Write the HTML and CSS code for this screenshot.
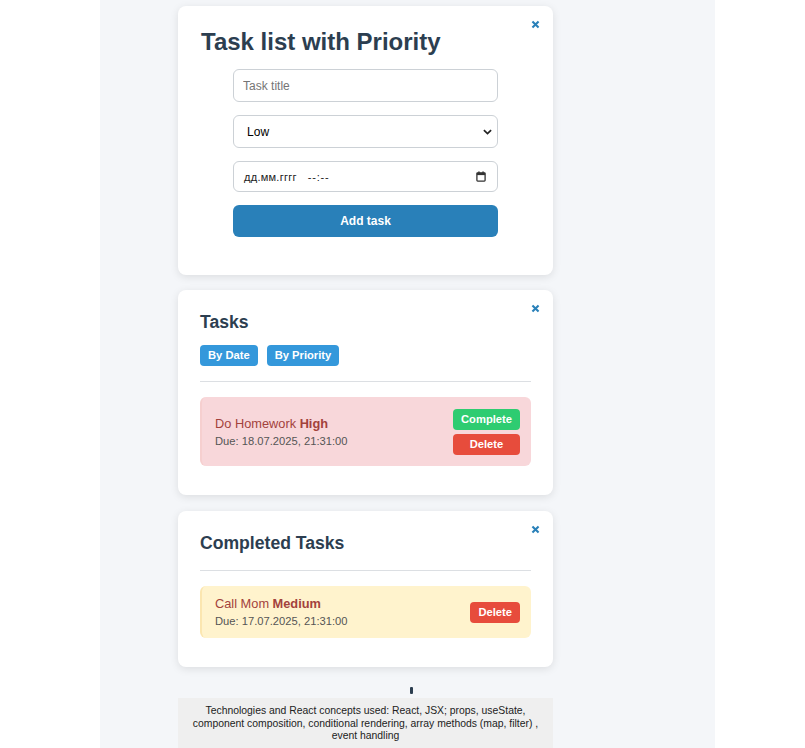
FILE: index.html
```html
<!DOCTYPE html>
<html lang="en">
<head>
<meta charset="utf-8">
<title>Task list with Priority</title>
<link rel="stylesheet" href="styles.css">
</head>
<body>
<div class="page">
  <div class="column">
    <div class="cards">
      <section class="card card-form">
        <button class="close" type="button" aria-label="Close">
          <svg viewBox="0 0 10 10" width="9" height="9"><path d="M1.6 1.6 L8.4 8.4 M8.4 1.6 L1.6 8.4" stroke="#2980b9" stroke-width="2.3" fill="none"/></svg>
        </button>
        <h1>Task list with Priority</h1>
        <form class="task-form">
          <input class="field text-field" type="text" placeholder="Task title">
          <div class="select-wrap">
            <select class="field select-field">
              <option>Low</option>
              <option>Medium</option>
              <option>High</option>
            </select>
            <svg class="chevron" viewBox="0 0 10 6" width="9" height="6"><path d="M1 1 L5 4.8 L9 1" stroke="#222" stroke-width="1.9" fill="none"/></svg>
          </div>
          <div class="field date-field">
            <span class="date-mask">дд.мм.гггг</span>
            <span class="time-mask">--:--</span>
            <svg class="cal" viewBox="0 0 10 11" width="10" height="11"><rect x="0.9" y="1.8" width="8.2" height="8.3" rx="0.8" stroke="#333" stroke-width="1.3" fill="none"/><rect x="0.9" y="1.8" width="8.2" height="2.3" fill="#333"/><rect x="2.3" y="0.4" width="1.3" height="2" fill="#333"/><rect x="6.4" y="0.4" width="1.3" height="2" fill="#333"/></svg>
          </div>
          <button class="add-btn" type="button">Add task</button>
        </form>
      </section>

      <section class="card card-tasks">
        <button class="close" type="button" aria-label="Close">
          <svg viewBox="0 0 10 10" width="9" height="9"><path d="M1.6 1.6 L8.4 8.4 M8.4 1.6 L1.6 8.4" stroke="#2980b9" stroke-width="2.3" fill="none"/></svg>
        </button>
        <h2>Tasks</h2>
        <div class="sort-row">
          <button class="btn btn-sort" type="button">By Date</button>
          <button class="btn btn-sort" type="button">By Priority</button>
        </div>
        <hr class="sep">
        <div class="task task-high">
          <div class="task-info">
            <div class="task-title">Do Homework <strong>High</strong></div>
            <div class="task-due">Due: 18.07.2025, 21:31:00</div>
          </div>
          <div class="task-actions">
            <button class="btn btn-complete" type="button">Complete</button>
            <button class="btn btn-delete" type="button">Delete</button>
          </div>
        </div>
      </section>

      <section class="card card-done">
        <button class="close" type="button" aria-label="Close">
          <svg viewBox="0 0 10 10" width="9" height="9"><path d="M1.6 1.6 L8.4 8.4 M8.4 1.6 L1.6 8.4" stroke="#2980b9" stroke-width="2.3" fill="none"/></svg>
        </button>
        <h2>Completed Tasks</h2>
        <hr class="sep sep-done">
        <div class="task task-medium">
          <div class="task-info">
            <div class="task-title">Call Mom <strong>Medium</strong></div>
            <div class="task-due">Due: 17.07.2025, 21:31:00</div>
          </div>
          <div class="task-actions">
            <button class="btn btn-delete" type="button">Delete</button>
          </div>
        </div>
      </section>
    </div>

    <div class="mark-row"><span class="mark"></span></div>

    <footer class="footer">Technologies and React concepts used: React, JSX; props, useState, component composition, conditional rendering, array methods (map, filter) , event handling</footer>
  </div>
</div>
</body>
</html>
```

FILE: styles.css
```css
* {
  box-sizing: border-box;
}

html, body {
  margin: 0;
  padding: 0;
  background: #ffffff;
}

body {
  font-family: "Liberation Sans", Arial, sans-serif;
  color: #2c3e50;
}

.page {
  width: 615px;
  height: 748px;
  overflow: hidden;
  margin-left: 100px;
  background: #f4f6f9;
  padding: 6px 0 0 78px;
}

.column {
  width: 375px;
}

.cards {
  display: flex;
  flex-direction: column;
  gap: 15px;
}

.card {
  position: relative;
  display: block;
  background: #ffffff;
  border-radius: 8px;
  box-shadow: 0 2px 8px rgba(0, 0, 0, 0.1);
  padding: 22px 22px 30px;
}

.card-form {
  padding-bottom: 38px;
}

.card-tasks {
  padding-bottom: 29px;
}

.card-done {
  margin-top: 1px;
  padding-bottom: 29px;
}

.close {
  position: absolute;
  top: 14px;
  right: 13px;
  width: 9px;
  height: 9px;
  padding: 0;
  border: none;
  background: none;
  display: block;
  cursor: pointer;
}

.close svg {
  display: block;
}

h1 {
  margin: 0 0 13px;
  padding-left: 1px;
  font-size: 24px;
  line-height: 28px;
  font-weight: bold;
  color: #2c3e50;
}

h2 {
  margin: 0 0 12px;
  font-size: 17.6px;
  line-height: 21px;
  font-weight: bold;
  color: #2c3e50;
}

.task-form {
  width: 80%;
  margin: 0 auto;
  display: flex;
  flex-direction: column;
  gap: 13px;
}

.field {
  width: 100%;
  height: 33px;
  border: 1px solid #ccd1d6;
  border-radius: 6px;
  background: #ffffff;
  font-family: "Liberation Sans", Arial, sans-serif;
  font-size: 12px;
  color: #111;
  outline: none;
}

.text-field {
  padding: 0 9px;
}

.text-field::placeholder {
  color: #757575;
}

.select-wrap {
  position: relative;
}

.select-field {
  display: block;
  appearance: none;
  -webkit-appearance: none;
  padding: 0 24px 0 13px;
  color: #000;
}

.chevron {
  position: absolute;
  right: 6px;
  top: 14px;
}

.date-field {
  height: 31px;
  display: flex;
  align-items: center;
  padding: 0 11px 0 10px;
  font-size: 11px;
  color: #222;
}

.date-mask {
  letter-spacing: 0.25px;
}

.time-mask {
  margin-left: 11px;
  letter-spacing: 0.8px;
}

.cal {
  margin-left: auto;
  display: block;
}

.add-btn {
  height: 32px;
  border: none;
  border-radius: 6px;
  background: #2980b9;
  color: #ffffff;
  font-family: "Liberation Sans", Arial, sans-serif;
  font-size: 12px;
  font-weight: bold;
  cursor: pointer;
}

.sort-row {
  display: flex;
  gap: 9px;
}

.btn {
  border: none;
  border-radius: 4px;
  padding: 4px 8px;
  font-family: "Liberation Sans", Arial, sans-serif;
  font-size: 11.2px;
  line-height: 13px;
  font-weight: bold;
  color: #ffffff;
  cursor: pointer;
}

.btn-sort {
  background: #3498db;
}

.btn-complete {
  background: #2ecc71;
}

.btn-delete {
  background: #e74c3c;
}

.sep {
  border: none;
  border-top: 1px solid #dcdfe3;
  height: 0;
  margin: 15px 0;
}

.sep-done {
  margin-top: 16px;
}

.task {
  display: flex;
  align-items: center;
  justify-content: space-between;
  padding: 10px 11px 10px 13px;
  border-left: 2px solid;
  border-radius: 6px;
}

.task-high {
  background: #f8d7da;
  border-left-color: #f6cfcf;
}

.task-medium {
  background: #fff3cd;
  border-left-color: #fbe6b0;
}

.task-title {
  font-size: 12.8px;
  line-height: 15px;
  color: #a3423c;
}

.task-title strong {
  font-weight: bold;
}

.task-due {
  margin-top: 4px;
  font-size: 11.2px;
  line-height: 13px;
  color: #555;
}

.task-actions {
  display: flex;
  flex-direction: column;
  gap: 4px;
  padding: 1.5px 0;
}

.mark-row {
  height: 31px;
  padding: 20px 0 0 232px;
}

.mark {
  display: block;
  width: 3px;
  height: 7px;
  border-radius: 1px;
  background: #2c3e50;
}

.footer {
  background: #efefef;
  padding: 7px 10px;
  font-size: 10.4px;
  line-height: 12.5px;
  text-align: center;
  color: #222;
}
```
